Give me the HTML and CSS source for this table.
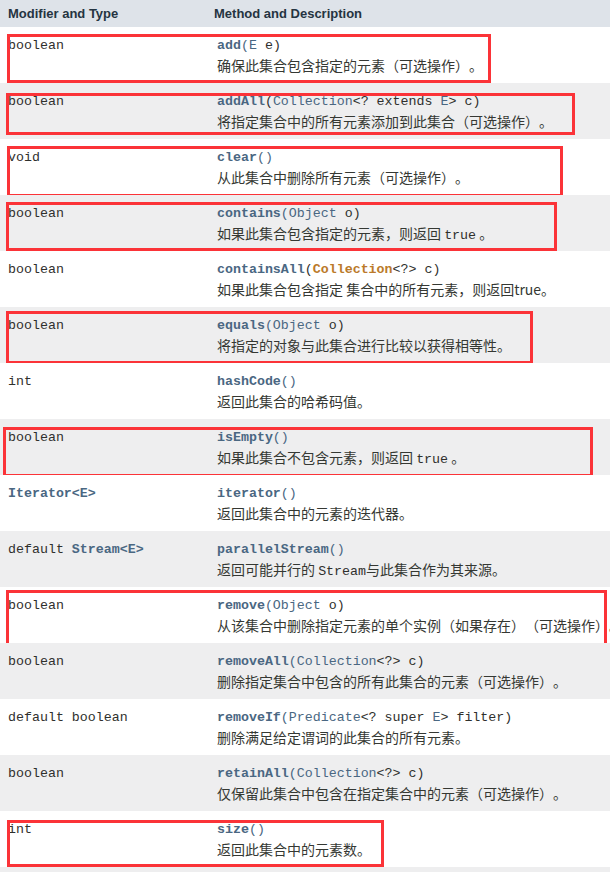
FILE: index.html
```html
<!DOCTYPE html>
<html lang="zh-CN">
<head>
  <meta charset="UTF-8" />
  <title>Collection 方法摘要</title>
  <link rel="stylesheet" href="styles.css">
</head>
<body>

  <div class="summary">
    <div class="head">
      <div class="col-type">Modifier and Type</div>
      <div class="col-method">Method and Description</div>
    </div>

    <div class="row alt">
      <div class="col-type"><code>boolean</code></div>
      <div class="col-method">
        <code><a class="name">add</a><a>(E</a> e)</code>
        <div class="desc">确保此集合包含指定的元素（可选操作）。</div>
      </div>
      <span class="mark" style="left:7px;top:7px;width:484px;height:49px"></span>
    </div>

    <div class="row">
      <div class="col-type"><code>boolean</code></div>
      <div class="col-method">
        <code><a class="name">addAll</a>(<a>Collection</a>&lt;? extends <a>E</a>&gt; c)</code>
        <div class="desc">将指定集合中的所有元素添加到此集合（可选操作）。</div>
      </div>
      <span class="mark" style="left:6px;top:10px;width:569px;height:42px"></span>
    </div>

    <div class="row alt">
      <div class="col-type"><code>void</code></div>
      <div class="col-method">
        <code><a class="name">clear</a><a>()</a></code>
        <div class="desc">从此集合中删除所有元素（可选操作）。</div>
      </div>
      <span class="mark" style="left:7px;top:7px;width:556px;height:51px"></span>
    </div>

    <div class="row">
      <div class="col-type"><code>boolean</code></div>
      <div class="col-method">
        <code><a class="name">contains</a><a>(Object</a> o)</code>
        <div class="desc">如果此集合包含指定的元素，则返回 <code>true</code> 。</div>
      </div>
      <span class="mark" style="left:6px;top:7px;width:551px;height:49px"></span>
    </div>

    <div class="row alt">
      <div class="col-type"><code>boolean</code></div>
      <div class="col-method">
        <code><a class="name">containsAll</a>(<a class="visited">Collection</a>&lt;?&gt; c)</code>
        <div class="desc">如果此集合包含指定 集合中的所有元素，则返回true。</div>
      </div>
    </div>

    <div class="row">
      <div class="col-type"><code>boolean</code></div>
      <div class="col-method">
        <code><a class="name">equals</a><a>(Object</a> o)</code>
        <div class="desc">将指定的对象与此集合进行比较以获得相等性。</div>
      </div>
      <span class="mark" style="left:6px;top:4px;width:527px;height:53px"></span>
    </div>

    <div class="row alt">
      <div class="col-type"><code>int</code></div>
      <div class="col-method">
        <code><a class="name">hashCode</a><a>()</a></code>
        <div class="desc">返回此集合的哈希码值。</div>
      </div>
    </div>

    <div class="row">
      <div class="col-type"><code>boolean</code></div>
      <div class="col-method">
        <code><a class="name">isEmpty</a><a>()</a></code>
        <div class="desc">如果此集合不包含元素，则返回 <code>true</code> 。</div>
      </div>
      <span class="mark" style="left:3px;top:8px;width:590px;height:50px"></span>
    </div>

    <div class="row alt">
      <div class="col-type"><code><a class="type">Iterator&lt;E&gt;</a></code></div>
      <div class="col-method">
        <code><a class="name">iterator</a><a>()</a></code>
        <div class="desc">返回此集合中的元素的迭代器。</div>
      </div>
    </div>

    <div class="row">
      <div class="col-type"><code>default <a class="type">Stream&lt;E&gt;</a></code></div>
      <div class="col-method">
        <code><a class="name">parallelStream</a><a>()</a></code>
        <div class="desc">返回可能并行的 <code>Stream</code>与此集合作为其来源。</div>
      </div>
    </div>

    <div class="row alt">
      <div class="col-type"><code>boolean</code></div>
      <div class="col-method">
        <code><a class="name">remove</a><a>(Object</a> o)</code>
        <div class="desc">从该集合中删除指定元素的单个实例（如果存在）（可选操作）。</div>
      </div>
      <span class="mark" style="left:6px;top:3px;width:601px;height:56px"></span>
    </div>

    <div class="row">
      <div class="col-type"><code>boolean</code></div>
      <div class="col-method">
        <code><a class="name">removeAll</a><a>(Collection</a>&lt;?&gt; c)</code>
        <div class="desc">删除指定集合中包含的所有此集合的元素（可选操作）。</div>
      </div>
    </div>

    <div class="row alt">
      <div class="col-type"><code>default boolean</code></div>
      <div class="col-method">
        <code><a class="name">removeIf</a><a>(Predicate</a>&lt;? super <a>E</a>&gt; filter)</code>
        <div class="desc">删除满足给定谓词的此集合的所有元素。</div>
      </div>
    </div>

    <div class="row">
      <div class="col-type"><code>boolean</code></div>
      <div class="col-method">
        <code><a class="name">retainAll</a><a>(Collection</a>&lt;?&gt; c)</code>
        <div class="desc">仅保留此集合中包含在指定集合中的元素（可选操作）。</div>
      </div>
    </div>

    <div class="row alt">
      <div class="col-type"><code>int</code></div>
      <div class="col-method">
        <code><a class="name">size</a><a>()</a></code>
        <div class="desc">返回此集合中的元素数。</div>
      </div>
      <span class="mark" style="left:7px;top:9px;width:377px;height:47px"></span>
    </div>

    <div class="row end"></div>
  </div>

</body>
</html>
```

FILE: styles.css
```css
body {
  margin: 0;
  padding: 0;
  background-color: #fff;
  color: #353833;
  font-family: "Liberation Sans", Arial, "Noto Sans CJK SC", sans-serif;
  overflow: hidden;
}

.summary {
  width: 610px;
  height: 872px;
  overflow: hidden;
}

.head,
.row {
  display: grid;
  grid-template-columns: 209px 1fr;
  padding-left: 8px;
  white-space: nowrap;
}

.head {
  height: 27px;
  align-items: center;
  background-color: #dee3e9;
  color: #253441;
  font-size: 13px;
  font-weight: bold;
}

.head .col-method {
  margin-left: -3px;
}

.row {
  position: relative;
  height: 56px;
  padding-top: 8px;
  box-sizing: border-box;
  background-color: #eeeeef;
}

.row.alt {
  background-color: #fff;
}

code {
  font-family: "Liberation Mono", "Courier New", monospace;
  font-size: 13.3px;
  line-height: 16px;
  color: #2f302d;
}

code a {
  color: #4a6782;
}

code a.name,
code a.type {
  font-weight: bold;
}

code a.visited {
  color: #bb7a2a;
  font-weight: bold;
}

.desc {
  margin-top: 1px;
  font-family: "Noto Sans CJK SC", "Liberation Sans", sans-serif;
  font-size: 14px;
  line-height: 20px;
  color: #353833;
  text-spacing-trim: space-all;
}

.desc code {
  font-size: 13.3px;
}

.mark {
  position: absolute;
  box-sizing: border-box;
  border: 3px solid #fb3338;
  pointer-events: none;
}
```
